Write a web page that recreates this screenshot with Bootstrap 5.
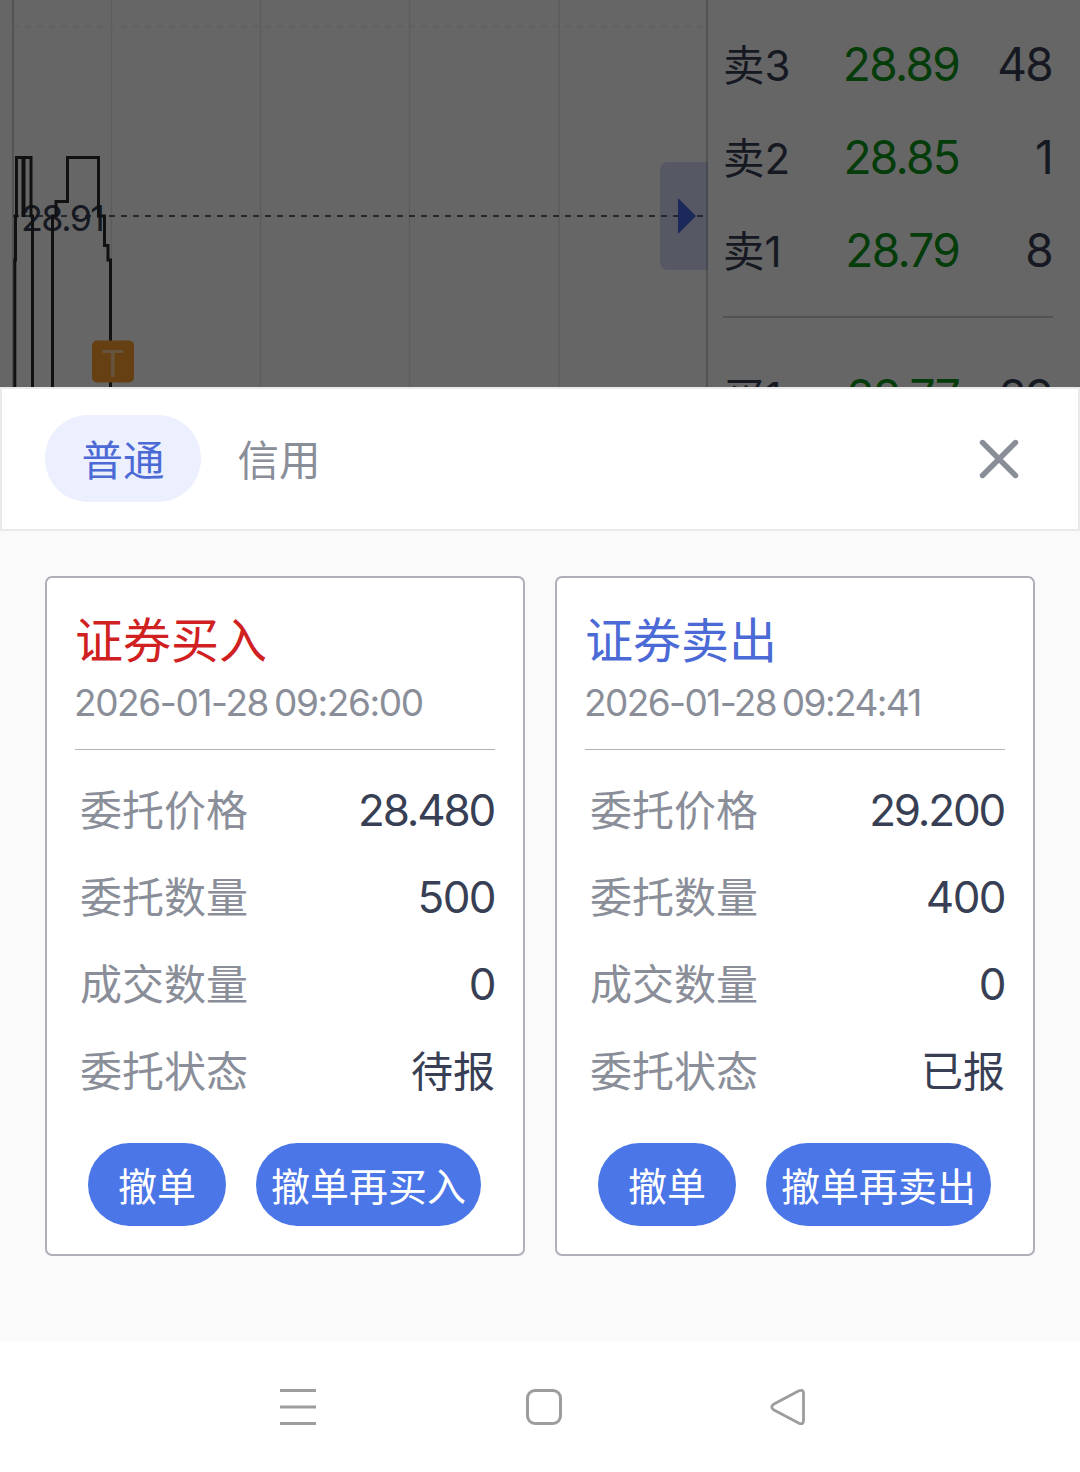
<!DOCTYPE html>
<html lang="zh-CN">
<head>
<meta charset="utf-8">
<meta name="viewport" content="width=device-width, initial-scale=1">
<title>撤单</title>
<link href="https://cdn.jsdelivr.net/npm/bootstrap@5.3.0/dist/css/bootstrap.min.css" rel="stylesheet">
<style>
body{font-family:"Noto Sans CJK SC",sans-serif;color:#383f54;background:#fff;overflow:hidden}
.screen{width:1080px;height:1472px}
.num{font-family:Inter,"Noto Sans CJK SC",sans-serif}
/* quote page behind the sheet */
.quote{height:387px}
.quote::after{content:"";position:absolute;inset:0;background:rgba(0,0,0,.6)}
.chart{width:708px;height:387px}
.book{padding:18px 28px 0 15px}
.level{height:93px}
.level .side{width:95px;font-size:41.5px}
.level .side .num{font-size:42px}
.level .price{color:#0c961a;font-size:46px;letter-spacing:-1.7px;width:141px}
.level .qty{font-size:46px;letter-spacing:-1.7px}
.rule{height:2px;background:#cdcdcd;margin:19px -1px 32px 0}
/* sheet */
.sheet-head{height:144px;border:2px solid #eaeaea;padding:0 58px 0 43px}
.tab-pill{width:156px;height:87px;border-radius:43px;font-size:41.5px;line-height:1;color:#8a8e99;border:0;background:none;padding:0;margin-top:-1px}
.tab-pill.active{background:#eceffd;color:#4c6ad6}
.sheet-body{height:810px;background:#fafafa;padding:45px 45px 0;gap:30px}
.order{width:480px;height:680px;border:2px solid #adafb9;border-radius:7px;padding:29px 28px 0}
.order-title{font-size:48px;line-height:60px;font-weight:400}
.buy{color:#d0201f}
.sell{color:#4c6ad6}
.order-time{font-size:37px;line-height:46px;letter-spacing:-1.4px;word-spacing:-3px;color:#8a8e99;margin-top:13px;margin-left:-1px}
.order-time.tight{letter-spacing:-1.6px}
.order-line{height:1px;background:#b0b2ba;margin:23px 0 17px}
.field{height:87px;line-height:87px;font-size:42px}
.field dt,.field .state{line-height:82px}
.field dt{font-weight:400;color:#8a8e99;padding-left:5px}
.field .num{font-size:44px;letter-spacing:-1.6px}
.field .num.long{letter-spacing:-2.2px;padding-right:1px}
.pill{height:83px;border-radius:42px;background:#4a76e8;color:#fff;font-size:39px;line-height:1;border:0;padding:0}
.pill:hover{background:#3f69d8;color:#fff}
.pill-s{width:138px}
.pill-l{width:225px}
.actions{gap:30px;padding:28px 0 0 13px}
.sysnav{height:131px}
</style>
<script src="https://cdn.jsdelivr.net/npm/bootstrap@5.3.0/dist/js/bootstrap.bundle.min.js"></script>
</head>
<body>
<div class="screen d-flex flex-column">
  <section class="quote position-relative d-flex overflow-hidden bg-white flex-shrink-0">
    <svg class="chart flex-shrink-0" viewBox="0 0 708 387" fill="none">
      <path d="M111.500 0V387M260.500 0V387M409.500 0V387M559 0V387" stroke="#e6e6e6" stroke-width="1.500"/>
      <path d="M13 0V387M707 0V387" stroke="#cecece" stroke-width="2"/>
      <path d="M13 26.500H706" stroke="#f0f0f0" stroke-width="2" stroke-dasharray="6 6" />
      <path d="M668 162H708V270H668a8 8 0 0 1-8-8V170a8 8 0 0 1 8-8Z" fill="#4a64e8" fill-opacity=".22"/>
      <path d="M13 216H704" stroke="#5f6579" stroke-width="2" stroke-dasharray="6 6"/>
      <path d="M678 198L696 216L678 234Z" fill="#4664e0"/>
      <text x="21" y="231" class="num" font-size="36" textLength="84" fill="#383f54">28.91</text>
      <path d="M14.800 387V260H15.500V216H16.500V157.500H31V216H32.500V387M52.500 387V216H56V201.500H67.500V157.500H98.500V216H104.500V245.500H108V260H110.500V387" stroke="#2b2b2b" stroke-width="3"/>
      <path d="M23.500 157V217" stroke="#2b2b2b" stroke-width="4"/>
      <rect x="92" y="340.500" width="42" height="42" rx="5" fill="#ffa02f"/>
      <text x="113" y="377" class="num" font-size="37" font-weight="400" text-anchor="middle" fill="#fff" fill-opacity=".55">T</text>
    </svg>
    <div class="book flex-grow-1">
      <div class="level d-flex align-items-center"><span class="side">卖<span class="num">3</span></span><span class="price num text-end">28.89</span><span class="qty num text-end flex-grow-1">48</span></div>
      <div class="level d-flex align-items-center"><span class="side">卖<span class="num">2</span></span><span class="price num text-end">28.85</span><span class="qty num text-end flex-grow-1">1</span></div>
      <div class="level d-flex align-items-center"><span class="side">卖<span class="num">1</span></span><span class="price num text-end">28.79</span><span class="qty num text-end flex-grow-1">8</span></div>
      <div class="rule"></div>
      <div class="level d-flex align-items-center"><span class="side">买<span class="num">1</span></span><span class="price num text-end">28.77</span><span class="qty num text-end flex-grow-1">29</span></div>
    </div>
  </section>

  <header class="sheet-head d-flex align-items-center bg-white flex-shrink-0">
    <button class="tab-pill active">普通</button>
    <button class="tab-pill">信用</button>
    <svg class="ms-auto" width="42" height="42" viewBox="0 0 42 42" stroke="#8a8e99" stroke-width="5.400" stroke-linecap="round"><path d="M4.500 4.500L37.500 37.500M37.500 4.500L4.500 37.500"/></svg>
  </header>

  <main class="sheet-body d-flex align-items-start flex-shrink-0">
    <article class="order bg-white">
      <h2 class="order-title buy m-0">证券买入</h2>
      <div class="order-time num">2026-01-28 09:26:00</div>
      <div class="order-line"></div>
      <dl class="m-0">
        <div class="field d-flex justify-content-between"><dt>委托价格</dt><dd class="num long m-0">28.480</dd></div>
        <div class="field d-flex justify-content-between"><dt>委托数量</dt><dd class="num m-0">500</dd></div>
        <div class="field d-flex justify-content-between"><dt>成交数量</dt><dd class="num m-0">0</dd></div>
        <div class="field d-flex justify-content-between"><dt>委托状态</dt><dd class="state m-0">待报</dd></div>
      </dl>
      <div class="actions d-flex"><button class="btn pill pill-s">撤单</button><button class="btn pill pill-l">撤单再买入</button></div>
    </article>
    <article class="order bg-white">
      <h2 class="order-title sell m-0">证券卖出</h2>
      <div class="order-time num tight">2026-01-28 09:24:41</div>
      <div class="order-line"></div>
      <dl class="m-0">
        <div class="field d-flex justify-content-between"><dt>委托价格</dt><dd class="num long m-0">29.200</dd></div>
        <div class="field d-flex justify-content-between"><dt>委托数量</dt><dd class="num m-0">400</dd></div>
        <div class="field d-flex justify-content-between"><dt>成交数量</dt><dd class="num m-0">0</dd></div>
        <div class="field d-flex justify-content-between"><dt>委托状态</dt><dd class="state m-0">已报</dd></div>
      </dl>
      <div class="actions d-flex"><button class="btn pill pill-s">撤单</button><button class="btn pill pill-l">撤单再卖出</button></div>
    </article>
  </main>

  <nav class="sysnav bg-white flex-shrink-0">
    <svg class="d-block" width="1080" height="131" viewBox="0 0 1080 131" fill="none" stroke="#9d9d9d" stroke-width="3" stroke-linejoin="round">
      <path d="M280 49.500H316M280 66H316M280 82.500H316"/>
      <rect x="527.500" y="49.500" width="33" height="33" rx="7.500"/>
      <path d="M773.500 63.300L799 49.800Q803.500 48 803.500 52.500V79.500Q803.500 84 799 82.200L773.500 68.700Q770 66 773.500 63.300Z" stroke-width="2.800"/>
    </svg>
  </nav>
</div>
</body>
</html>
